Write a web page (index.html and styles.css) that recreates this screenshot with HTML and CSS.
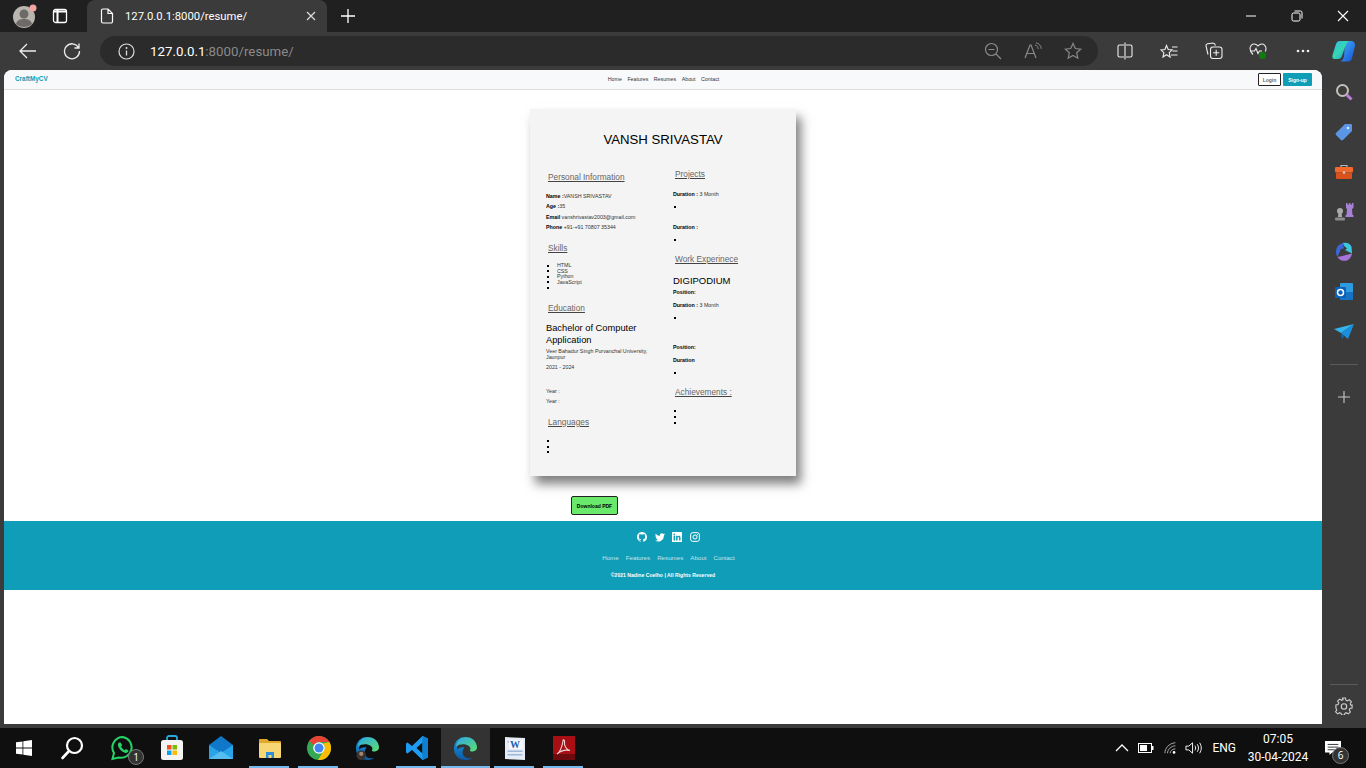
FILE: index.html
```html
<!DOCTYPE html>
<html lang="en">
<head>
    <meta charset="UTF-8">
    <meta name="viewport" content="width=device-width, initial-scale=1.0">
    <title>CraftMyCV Resume</title>
    <link rel="stylesheet" href="styles.css">
</head>
<body>
    <svg class="defs" width="0" height="0">
        <defs>
            <linearGradient id="edgeA" x1="0" y1="0" x2="1" y2="1"><stop offset="0" stop-color="#2fa8e8"/><stop offset="1" stop-color="#5ade6e"/></linearGradient>
            <linearGradient id="edgeB" x1="0" y1="0" x2="0" y2="1"><stop offset="0" stop-color="#1b9de2"/><stop offset="1" stop-color="#0c59a4"/></linearGradient>
            <linearGradient id="copA" x1="0" y1="0" x2="1" y2="1"><stop offset="0" stop-color="#3fb5f5"/><stop offset="1" stop-color="#1a4fd8"/></linearGradient>
            <linearGradient id="copB" x1="0" y1="0" x2="1" y2="1"><stop offset="0" stop-color="#2fb8e8"/><stop offset=".5" stop-color="#38d6b0"/><stop offset="1" stop-color="#1b8de8"/></linearGradient>
            <symbol id="edge" viewBox="0 0 26 26">
                <path d="M13 1C6 1 1 6 1 13c0 7 5 12 12 12 3 0 5-.8 7-2.200-5 1.500-10-1-10-6 0-2 1-3.500 2-4.500-2-1-5-.5-8 2C5 8 8 1 13 1z" fill="url(#edgeB)"/>
                <path d="M3 11C4 5 8 1 13 1c7 0 12 5 12 11 0 2.500-2 4-4.500 4-2 0-3-.5-3-1 1-1 1-3-1-4.500-4-3-10-2-13.500.5z" fill="url(#edgeA)"/>
            </symbol>
        </defs>
    </svg>

    <div class="tabstrip">
        <div class="avatar">
            <svg width="24" height="24" viewBox="0 0 24 24"><circle cx="11" cy="13" r="11" fill="#b9b5af"/><circle cx="11" cy="10" r="4.500" fill="#6e6a68"/><path d="M3 20c1-4 4-5 8-5s7 1 8 5c-2 2-5 3-8 3s-6-1-8-3z" fill="#6e6a68"/><circle cx="20" cy="4" r="3.500" fill="#f3a5a0"/></svg>
        </div>
        <div class="tab-actions">
            <svg width="16" height="16" viewBox="0 0 16 16"><rect x="1.500" y="1.500" width="13" height="13" rx="2" fill="none" stroke="#fff" stroke-width="1.300"/><path d="M1.500 3.500h13M5.500 1.500v13" stroke="#fff" stroke-width="2" fill="none"/></svg>
        </div>
        <div class="tab">
            <svg width="14" height="16" viewBox="0 0 14 16"><path d="M1.500 2.500a1.500 1.500 0 0 1 1.500-1.500h5l4.500 4.500v8a1.500 1.500 0 0 1-1.500 1.500h-8a1.500 1.500 0 0 1-1.500-1.500zM8 1v4.500h4.500" fill="none" stroke="#fff" stroke-width="1.200"/></svg>
            <span class="tab-title">127.0.0.1:8000/resume/</span>
            <svg width="10" height="10" viewBox="0 0 10 10"><path d="M1 1l8 8M9 1l-8 8" stroke="#ddd" stroke-width="1.200"/></svg>
        </div>
        <div class="new-tab">
            <svg width="16" height="16" viewBox="0 0 16 16"><path d="M8 1v14M1 8h14" stroke="#fff" stroke-width="1.300"/></svg>
        </div>
        <div class="window-btns">
            <div class="win-btn"><svg width="12" height="12" viewBox="0 0 12 12"><path d="M1 6h10" stroke="#fff" stroke-width="1"/></svg></div>
            <div class="win-btn"><svg width="12" height="12" viewBox="0 0 12 12"><rect x="1" y="3" width="8" height="8" rx="1.500" fill="none" stroke="#fff"/><path d="M3.500 1h6a1.500 1.500 0 0 1 1.500 1.500v6" fill="none" stroke="#fff"/></svg></div>
            <div class="win-btn"><svg width="12" height="12" viewBox="0 0 12 12"><path d="M1 1l10 10M11 1l-10 10" stroke="#fff" stroke-width="1.100"/></svg></div>
        </div>
    </div>

    <div class="toolbar">
        <div class="tool-btn">
            <svg width="20" height="18" viewBox="0 0 20 18"><path d="M18 9H2M9 2L2 9l7 7" fill="none" stroke="#eee" stroke-width="1.300"/></svg>
        </div>
        <div class="tool-btn">
            <svg width="18" height="18" viewBox="0 0 18 18"><path d="M15.500 5.500A7.500 7.500 0 1 0 16.500 9M16 1.500v4.500h-4.500" fill="none" stroke="#eee" stroke-width="1.300"/></svg>
        </div>
        <div class="address">
            <svg class="info" width="17" height="17" viewBox="0 0 17 17"><circle cx="8.500" cy="8.500" r="7.500" fill="none" stroke="#ddd" stroke-width="1.200"/><path d="M8.500 7.500v5" stroke="#ddd" stroke-width="1.300"/><circle cx="8.500" cy="5" r="1" fill="#ddd"/></svg>
            <span class="url"><span class="url-host">127.0.0.1</span>:8000/resume/</span>
            <div class="addr-btn"><svg width="18" height="18" viewBox="0 0 18 18"><circle cx="7.500" cy="7.500" r="6" fill="none" stroke="#8a8a8a" stroke-width="1.200"/><path d="M4.500 7.500h6M12 12l5 5" stroke="#8a8a8a" stroke-width="1.200"/></svg></div>
            <div class="addr-btn"><svg width="18" height="18" viewBox="0 0 18 18"><path d="M1 16L6 3h1l5 13M3 11.500h7" fill="none" stroke="#8a8a8a" stroke-width="1.200"/><path d="M11 3c2 .5 3 2 3.300 4M12 .8c3 .6 5 3 5.300 6" fill="none" stroke="#8a8a8a"/></svg></div>
            <div class="addr-btn"><svg width="18" height="18" viewBox="0 0 18 18"><path d="M9 1.500l2.300 5 5.400.6-4 3.700 1.100 5.400L9 13.500l-4.800 2.700 1.100-5.400-4-3.700 5.400-.6z" fill="none" stroke="#8a8a8a" stroke-width="1.200"/></svg></div>
        </div>
        <div class="tool-right">
            <div class="tool-slot"><svg width="16" height="18" viewBox="0 0 16 18"><path d="M7 3H2.500a1.500 1.500 0 0 0-1.500 1.500v9A1.500 1.500 0 0 0 2.500 15H7M9 3h4.500A1.500 1.500 0 0 1 15 4.500v9a1.500 1.500 0 0 1-1.500 1.500H9M8 0.500v17" fill="none" stroke="#eee" stroke-width="1.100"/></svg></div>
            <div class="tool-slot"><svg width="18" height="18" viewBox="0 0 18 18"><path d="M6.500 1.500l1.700 4 4 .4-3 2.800.9 4.300-3.600-2.300L3 13l.9-4.300-3-2.800 4-.4z" transform="translate(0 2)" fill="none" stroke="#eee" stroke-width="1.100"/><path d="M12 5h5.500M12.500 9h5M11 13h6.500" stroke="#eee" stroke-width="1.100"/></svg></div>
            <div class="tool-slot"><svg width="18" height="18" viewBox="0 0 18 18"><path d="M3 12.500L1 4a2 2 0 0 1 1.500-2.300L8 1c1.500 0 2 .8 2.500 2.500" fill="none" stroke="#eee" stroke-width="1.100"/><rect x="5.500" y="5" width="11.500" height="11.500" rx="2.500" fill="#3b3b3b" stroke="#eee" stroke-width="1.100"/><path d="M11.200 7.800v6M8.200 10.800h6" stroke="#eee" stroke-width="1.100"/></svg></div>
            <div class="tool-slot"><svg width="18" height="18" viewBox="0 0 18 18"><path d="M4 12.500C2 10.500 1 9 1 6.500 1 4 3 2 5 2c1.700 0 3 .8 4 2 1-1.200 2.300-2 4-2 2 0 4 2 4 4.500 0 1-.2 2-.7 3" fill="none" stroke="#eee" stroke-width="1.100"/><path d="M1.500 9h4l1.500-2.500L9 11.500l1.500-2.500H13" fill="none" stroke="#eee" stroke-width="1.100"/><circle cx="13.500" cy="13.500" r="3.500" fill="#107c10"/></svg></div>
            <div class="tool-slot"><svg width="14" height="4" viewBox="0 0 14 4"><circle cx="2" cy="2" r="1.300" fill="#eee"/><circle cx="7" cy="2" r="1.300" fill="#eee"/><circle cx="12" cy="2" r="1.300" fill="#eee"/></svg></div>
            <div class="tool-slot copilot"><svg width="24" height="24" viewBox="0 0 24 24"><path d="M13 2h6c2.500 0 4.500 2 4 5l-3 12c-.6 2.500-2 3.500-4 3.500H8c2-.5 3-2 4-5z" fill="url(#copA)"/><path d="M8 2h9c-2 1-3 3-4 6l-3 9c-.5 2-2 3-4 3H2.500C.5 20 0 18 .5 16L4 5C4.700 3 6 2 8 2z" fill="url(#copB)"/></svg></div>
        </div>
    </div>

    <div class="browser-body">
        <div class="page">
            <nav class="navbar">
                <a class="brand">CraftMyCV</a>
                <div class="nav-links">
                    <a>Home</a><a>Features</a><a>Resumes</a><a>About</a><a>Contact</a>
                </div>
                <div class="nav-auth">
                    <button class="btn-login">Login</button>
                    <button class="btn-signup">Sign-up</button>
                </div>
            </nav>

            <div class="resume-wrap">
                <div class="resume-card">
                    <h1 class="resume-name">VANSH SRIVASTAV</h1>
                    <div class="resume-cols">
                        <div class="col-left">
                            <h2 class="sec-title">Personal Information</h2>
                            <p class="row"><b>Name :</b>VANSH SRIVASTAV</p>
                            <p class="row"><b>Age :</b>35</p>
                            <p class="row"><b>Email</b> vanshrivastav2003@gmail.com</p>
                            <p class="row"><b>Phone</b> +91-+91 70807 35344</p>

                            <h2 class="sec-title skills-title">Skills</h2>
                            <ul class="list tight">
                                <li>HTML</li>
                                <li>CSS</li>
                                <li>Python</li>
                                <li>JavaScript</li>
                                <li></li>
                            </ul>

                            <h2 class="sec-title edu-title">Education</h2>
                            <h3 class="degree">Bachelor of Computer Application</h3>
                            <p class="school">Veer Bahadur Singh Purvanchal University, Jaunpur</p>
                            <p class="row years">2021 - 2024</p>
                            <p class="row year-a">Year :</p>
                            <p class="row">Year :</p>

                            <h2 class="sec-title lang-title">Languages</h2>
                            <ul class="list tight">
                                <li></li>
                                <li></li>
                                <li></li>
                            </ul>
                        </div>
                        <div class="col-right">
                            <h2 class="sec-title">Projects</h2>
                            <p class="row first"><b>Duration :</b> 3 Month</p>
                            <ul class="list gap-after"><li></li></ul>
                            <p class="row"><b>Duration :</b></p>
                            <ul class="list"><li></li></ul>

                            <h2 class="sec-title work-title">Work Experinece</h2>
                            <h3 class="company">DIGIPODIUM</h3>
                            <p class="row"><b>Position:</b></p>
                            <p class="row dur"><b>Duration :</b> 3 Month</p>
                            <ul class="list gap-after-lg"><li></li></ul>
                            <p class="row"><b>Position:</b></p>
                            <p class="row dur"><b>Duration</b></p>
                            <ul class="list"><li></li></ul>

                            <h2 class="sec-title ach-title">Achievements :</h2>
                            <ul class="list ach-list">
                                <li></li>
                                <li></li>
                                <li></li>
                            </ul>
                        </div>
                    </div>
                </div>
                <button class="btn-download">Download PDF</button>
            </div>

            <footer class="footer">
                <div class="socials">
                    <svg width="10" height="10" viewBox="0 0 16 16"><path fill="#fff" d="M8 0C3.580 0 0 3.580 0 8c0 3.540 2.290 6.530 5.470 7.590.4.070.55-.17.55-.38v-1.340c-2.230.48-2.700-1.070-2.700-1.070-.36-.92-.89-1.170-.89-1.170-.73-.5.050-.49.050-.49.800.060 1.230.820 1.230.820.710 1.220 1.870.870 2.330.660.070-.520.280-.870.510-1.070-1.780-.2-3.640-.890-3.640-3.950 0-.870.310-1.590.820-2.150-.080-.2-.360-1.020.080-2.120 0 0 .670-.210 2.200.820a7.600 7.600 0 0 1 4 0c1.530-1.040 2.200-.820 2.200-.820.440 1.100.160 1.920.080 2.120.510.560.820 1.270.820 2.150 0 3.070-1.870 3.750-3.650 3.950.290.250.540.730.540 1.480v2.200c0 .210.150.460.550.380A8 8 0 0 0 16 8c0-4.420-3.580-8-8-8z"/></svg>
                    <svg width="10" height="10" viewBox="0 0 16 16"><path fill="#fff" d="M16 3.500c-.6.300-1.200.450-1.900.550.700-.400 1.200-1 1.450-1.800-.650.400-1.350.650-2.100.800A3.300 3.300 0 0 0 7.800 6C5.100 5.850 2.700 4.550 1.100 2.600c-.9 1.500-.450 3.450 1 4.400-.550 0-1.050-.150-1.500-.400 0 1.600 1.150 2.950 2.650 3.250-.500.150-1 .150-1.500.050.400 1.300 1.600 2.250 3.050 2.300A6.600 6.600 0 0 1 0 13.550 9.300 9.300 0 0 0 14.350 5.300c.650-.450 1.200-1.050 1.650-1.800z"/></svg>
                    <svg width="10" height="10" viewBox="0 0 16 16"><path fill="#fff" fill-rule="evenodd" d="M1 0h14a1 1 0 0 1 1 1v14a1 1 0 0 1-1 1H1a1 1 0 0 1-1-1V1a1 1 0 0 1 1-1zm1.500 6v7.500h2.400V6zm1.200-3.700a1.400 1.400 0 1 0 0 2.800 1.400 1.400 0 0 0 0-2.800zM6.500 6v7.500h2.400V9.700c0-2.100 2.400-2.200 2.400 0v3.800h2.300V9c0-3.600-3.700-3.500-4.800-1.700V6z"/></svg>
                    <svg width="10" height="10" viewBox="0 0 16 16"><rect x="1" y="1" width="14" height="14" rx="3.500" fill="none" stroke="#fff" stroke-width="1.600"/><circle cx="8" cy="8" r="3.300" fill="none" stroke="#fff" stroke-width="1.600"/><circle cx="12" cy="4" r="1" fill="#fff"/></svg>
                </div>
                <div class="foot-links">
                    <a>Home</a><a>Features</a><a>Resumes</a><a>About</a><a>Contact</a>
                </div>
                <p class="copy">©2021 Nadine Coelho | All Rights Reserved</p>
            </footer>
        </div>

        <aside class="sidebar">
            <div class="side-btn"><svg width="18" height="18" viewBox="0 0 18 18"><circle cx="7.500" cy="7.500" r="5.500" fill="none" stroke="#c4c0ba" stroke-width="2"/><path d="M11.500 11.500l5 5" stroke="#b97fd8" stroke-width="3"/></svg></div>
            <div class="side-btn"><svg width="18" height="18" viewBox="0 0 18 18"><path d="M10 1h6a1 1 0 0 1 1 1v6l-9 9a1.500 1.500 0 0 1-2 0l-5-5a1.500 1.500 0 0 1 0-2z" fill="#5b95e6"/><circle cx="13" cy="5" r="1.300" fill="#dfe9f8"/></svg></div>
            <div class="side-btn"><svg width="18" height="18" viewBox="0 0 18 18"><path d="M6 4V2.500h6V4" fill="none" stroke="#b9b9b9" stroke-width="1.200"/><rect y="4" width="18" height="5.500" rx="1" fill="#f0682a"/><rect x="1" y="9.500" width="16" height="6.500" rx="1" fill="#d9521c"/><circle cx="9" cy="9.500" r="1.300" fill="#cfcfcf"/></svg></div>
            <div class="side-btn"><svg width="20" height="20" viewBox="0 0 20 20"><circle cx="6" cy="9" r="3" fill="#a9a9a9"/><path d="M4.500 11h3l.6 4H3.900z" fill="#a9a9a9"/><rect x="1" y="15.500" width="10" height="3" rx="1" fill="#8b8b8b"/><path d="M12 1h1.500v1.500H15V1h1.500v1.500H18V1h1.500v5l-1.500 1 .5 6h1v2h-8v-2h1l.5-6L12 6z" fill="#a681d6"/></svg></div>
            <div class="side-btn"><svg width="20" height="20" viewBox="0 0 20 20"><path d="M9 1c-4 1-7 4-7 9 0 2 .5 3.500 1.500 5L6 9c.5-2 2-3 4-2z" fill="#3a66d6"/><path d="M9 1c4-1 7 .5 8.500 3.500l.5 7-7-3.500 2-1.500C12 5 10 5 9 1z" fill="#3ec6e0"/><path d="M3.500 15c2 3.500 6 4.500 9.500 3.500 2.500-1 4.500-3.500 5-7L12 13c-2 1-5 1-8.500 2z" fill="#a673d9"/></svg></div>
            <div class="side-btn"><svg width="20" height="20" viewBox="0 0 20 20"><rect x="6" y="1" width="13" height="16" rx="1" fill="#2e9be0"/><rect x="6" y="10" width="13" height="8" fill="#1572c4"/><rect x="1" y="5" width="11" height="11" rx="1" fill="#0a62b8"/><circle cx="6.500" cy="10.500" r="3" fill="none" stroke="#fff" stroke-width="1.500"/></svg></div>
            <div class="side-btn"><svg width="20" height="18" viewBox="0 0 20 18"><path d="M0 6L20 1 7 10z" fill="#34b4ec"/><path d="M20 1L7 10l7 6z" fill="#1a8fdc"/><path d="M7 10l1 6 2-3z" fill="#0f6cb8"/></svg></div>
            <div class="side-line"></div>
            <div class="side-btn plus"><svg width="14" height="14" viewBox="0 0 14 14"><path d="M7 1v12M1 7h12" stroke="#c8c8c8" stroke-width="1.100"/></svg></div>
            <div class="side-bottom">
                <div class="side-line"></div>
                <div class="side-btn"><svg width="18" height="18" viewBox="0 0 18 18"><path d="M7.500 1h3l.4 2.200 1.500.7 1.900-1.200 2.100 2.100-1.200 1.900.7 1.500L17.100 8v3l-2.200.4-.7 1.500 1.200 1.900-2.100 2.100-1.900-1.200-1.500.7-.4 1.600h-3l-.4-1.600-1.500-.7-1.900 1.200-2.100-2.100 1.200-1.900-.7-1.500L.9 11V8l2.200-.4.7-1.500-1.200-1.900 2.100-2.100 1.900 1.200 1.500-.7z" fill="none" stroke="#d0d0d0" stroke-width="1.100"/><circle cx="9" cy="9.500" r="2.700" fill="none" stroke="#d0d0d0" stroke-width="1.100"/></svg></div>
            </div>
        </aside>
    </div>

    <div class="taskbar">
        <div class="task-fixed"><svg width="16" height="16" viewBox="0 0 16 16"><path fill="#fff" d="M0 2.300L6.500 1.400v6.200H0zM7.300 1.300L16 0v7.600H7.300zM0 8.400h6.500v6.200L0 13.700zM7.300 8.400H16V16l-8.700-1.200z"/></svg></div>
        <div class="task-fixed"><svg width="24" height="24" viewBox="0 0 24 24"><circle cx="14.500" cy="9.500" r="7.500" fill="none" stroke="#fff" stroke-width="2.200"/><path d="M9 15l-6.500 7" stroke="#fff" stroke-width="2.600" stroke-linecap="round"/></svg></div>
        <div class="task-app">
            <svg width="26" height="26" viewBox="0 0 26 26"><path d="M13 2a10.500 10.500 0 0 0-9 16L2.500 24l6-1.500A10.500 10.500 0 1 0 13 2z" fill="none" stroke="#25d366" stroke-width="2"/><path d="M9 7.500c-1.500 1-1.500 3 0 5.500s4 4.500 6.500 5c1.500.2 3-1 3-2.500l-2.500-1.500-1.300 1.200c-1.500-.7-3-2.200-3.700-3.700l1.200-1.300L10.500 7.500z" fill="#25d366"/></svg>
            <span class="task-badge">1</span>
        </div>
        <div class="task-app">
            <svg width="24" height="26" viewBox="0 0 24 26"><path d="M7 6V3a2 2 0 0 1 2-2h6a2 2 0 0 1 2 2v3" fill="none" stroke="#29a8e0" stroke-width="1.800"/><rect x="1" y="5" width="22" height="20" rx="2.500" fill="#f4f4f4"/><rect x="7" y="10" width="4.500" height="4.500" fill="#f25022"/><rect x="12.500" y="10" width="4.500" height="4.500" fill="#7fba00"/><rect x="7" y="15.500" width="4.500" height="4.500" fill="#00a4ef"/><rect x="12.500" y="15.500" width="4.500" height="4.500" fill="#ffb900"/></svg>
        </div>
        <div class="task-app">
            <svg width="26" height="26" viewBox="0 0 26 26"><path d="M13 1L1 10v14h24V10z" fill="#0f78c8"/><path d="M1 10l12 8 12-8v14H1z" fill="#29a3e8"/><path d="M1 24l12-8 12 8z" fill="#55bdf0"/></svg>
        </div>
        <div class="task-app on">
            <svg width="24" height="22" viewBox="0 0 24 22"><path d="M1 3a1 1 0 0 1 1-1h7l2 2h11a1 1 0 0 1 1 1v3H1z" fill="#e0a92e"/><rect x="1" y="6" width="22" height="15" rx="1" fill="#f7d774"/><path d="M8 21v-6h8v6h-2.500v-3h-3v3z" fill="#2a8fd8"/></svg>
        </div>
        <div class="task-app on">
            <svg width="24" height="24" viewBox="0 0 24 24"><circle cx="12" cy="12" r="12" fill="#34a853"/><path d="M12 0a12 12 0 0 1 10.400 6H12a6 6 0 0 0-5.500 3.600L2.400 4.700A12 12 0 0 1 12 0z" fill="#ea4335"/><path d="M22.400 6A12 12 0 0 1 11 24l5.500-9a6 6 0 0 0-.6-7.500z" fill="#fbbc05"/><circle cx="12" cy="12" r="5.800" fill="#fff"/><circle cx="12" cy="12" r="4.500" fill="#4285f4"/></svg>
        </div>
        <div class="task-app">
            <svg width="25" height="25" viewBox="0 0 26 26"><use href="#edge"/><circle cx="6.500" cy="20" r="5" fill="#3a3431"/><circle cx="6.500" cy="18.500" r="2.200" fill="#a98672"/></svg>
        </div>
        <div class="task-app on">
            <svg width="24" height="26" viewBox="0 0 24 26"><path d="M17.500 1L23 3.500v19L17.500 25 7 15l-4.500 3.500L1 17.500v-9L2.500 7.500 7 11zM17.500 7.500L11.500 13l6 5.500z" fill="#1f9cf0" fill-rule="evenodd"/><path d="M17.500 1L23 3.500v19L17.500 25z" fill="#0f7fd0"/></svg>
        </div>
        <div class="task-app active">
            <svg width="25" height="25" viewBox="0 0 26 26"><use href="#edge"/></svg>
        </div>
        <div class="task-app on">
            <svg width="24" height="26" viewBox="0 0 24 26"><path d="M2 2l20 1v22L2 24z" fill="#e6ecf6"/><rect x="4.500" y="6" width="15" height="1.500" fill="#9db7dc"/><rect x="4.500" y="19" width="15" height="1.500" fill="#9db7dc"/><rect x="4.500" y="15.500" width="15" height="1.500" fill="#9db7dc"/><rect x="6" y="5" width="14" height="9" fill="#f5f7fb"/><text x="7" y="13" class="word-w">W</text></svg>
        </div>
        <div class="task-app on">
            <svg width="22" height="24" viewBox="0 0 22 24"><rect width="22" height="24" fill="#a80f14"/><rect y="18" width="22" height="6" fill="#6d0a0d"/><path d="M4 18c3-2 5-7 6-13 0-2 2-1 1.500 1-.5 4 2 8 5.500 8.500-5-1-9 0-13 3.500z" fill="none" stroke="#f0d8d8" stroke-width="1.100"/></svg>
        </div>
        <div class="tray">
            <svg class="tray-chev" width="14" height="8" viewBox="0 0 14 8"><path d="M1 7l6-6 6 6" fill="none" stroke="#fff" stroke-width="1.300"/></svg>
            <svg class="tray-batt" width="16" height="10" viewBox="0 0 16 10"><rect x=".5" y=".5" width="13" height="9" fill="none" stroke="#fff"/><rect x="2" y="2" width="7" height="6" fill="#fff"/><rect x="14" y="3" width="1.500" height="4" fill="#fff"/></svg>
            <svg class="tray-wifi" width="14" height="14" viewBox="0 0 16 14"><path d="M1 13C1 7 6 1.500 13 1M4 13c0-4 4-8.500 9-8.500M7 13c0-2.500 2.500-5 6-5" fill="none" stroke="#bbb" stroke-width="1"/><circle cx="11.500" cy="12" r="1.500" fill="#fff"/></svg>
            <svg class="tray-vol" width="17" height="14" viewBox="0 0 18 14"><path d="M1 5h3l4-3.500v11L4 9H1z" fill="none" stroke="#fff"/><path d="M10.500 4.500c1 1.500 1 3.500 0 5M13 3c1.700 2.500 1.700 5.500 0 8M15.500 1.500c2.300 3.500 2.300 7.500 0 11" fill="none" stroke="#fff"/></svg>
            <span class="tray-lang">ENG</span>
            <div class="clock"><span>07:05</span><span>30-04-2024</span></div>
            <div class="notify">
                <svg width="18" height="16" viewBox="0 0 20 18"><path d="M1 1h18v13H9l-3 3v-3H1z" fill="#fff"/><path d="M4 5h12M4 8h12M4 11h8" stroke="#222" stroke-width="1"/></svg>
                <span class="task-badge">6</span>
            </div>
        </div>
    </div>
</body>
</html>
```

FILE: styles.css
```css
* {
    box-sizing: border-box;
}
html, body {
    margin: 0;
    height: 768px;
    overflow: hidden;
}
body {
    background-color: #3b3b3b;
    font-family: "Liberation Sans", Arial, sans-serif;
    display: flex;
    flex-direction: column;
}
.defs {
    display: block;
    height: 0;
}

/* tab strip */
.tabstrip {
    height: 32px;
    background-color: #202020;
    display: flex;
    align-items: flex-end;
    flex-shrink: 0;
}
.avatar {
    width: 44px;
    height: 32px;
    display: flex;
    align-items: center;
    justify-content: flex-end;
    padding-right: 7px;
}
.tab-actions {
    width: 32px;
    height: 32px;
    display: flex;
    align-items: center;
    justify-content: center;
}
.tab {
    margin-left: 11px;
    width: 240px;
    height: 32px;
    background-color: #3b3b3b;
    border-radius: 8px 8px 0 0;
    display: flex;
    align-items: center;
    padding: 0 11px 0 13px;
    color: #fff;
}
.tab-title {
    flex: 1;
    margin-left: 11px;
    font-family: Roboto, sans-serif;
    font-size: 11.3px;
}
.new-tab {
    width: 42px;
    height: 32px;
    display: flex;
    align-items: center;
    justify-content: center;
}
.window-btns {
    margin-left: auto;
    display: flex;
    height: 32px;
}
.win-btn {
    width: 46px;
    display: flex;
    align-items: center;
    justify-content: center;
}

/* toolbar */
.toolbar {
    height: 38px;
    display: flex;
    align-items: center;
    padding: 0 4px 0 8px;
    gap: 4px;
    flex-shrink: 0;
}
.tool-btn {
    width: 40px;
    height: 30px;
    display: flex;
    align-items: center;
    justify-content: center;
}
.address {
    flex: 1;
    margin-left: 4px;
    height: 30px;
    border-radius: 15px;
    background-color: #2b2b2b;
    display: flex;
    align-items: center;
    padding: 0 5px 0 18px;
}
.url {
    flex: 1;
    margin-left: 15px;
    font-family: Roboto, sans-serif;
    font-size: 13.3px;
    color: #8a8a8a;
}
.url-host {
    color: #fff;
}
.addr-btn {
    width: 40px;
    display: flex;
    justify-content: center;
}
.tool-right {
    display: flex;
    align-items: center;
    margin-left: 1px;
}
.tool-slot {
    width: 44.5px;
    display: flex;
    justify-content: center;
}
.copilot {
    width: 37px;
}

/* main area */
.browser-body {
    height: 658px;
    display: flex;
    flex-shrink: 0;
}
.page {
    margin-left: 4px;
    width: 1318px;
    height: 654px;
    background-color: #fff;
    border-radius: 8px 8px 0 0;
    overflow: hidden;
}
.navbar {
    height: 20px;
    background-color: #f8f9fa;
    border-bottom: 1px solid #dcdcdc;
    display: grid;
    grid-template-columns: 1fr auto 1fr;
    align-items: center;
    padding: 0 10px 0 11px;
}
.brand {
    margin-bottom: 2px;
    font-size: 6.4px;
    font-weight: bold;
    color: #0f9db7;
}
.nav-links {
    margin-bottom: 2px;
    display: flex;
    gap: 5.5px;
    font-size: 5.3px;
    color: #333;
}
.nav-auth {
    display: flex;
    justify-content: flex-end;
    gap: 2px;
}
.nav-auth button {
    height: 13px;
    font-size: 5px;
    font-weight: bold;
    font-family: inherit;
    padding: 0;
    border-radius: 1px;
}
.btn-login {
    width: 23px;
    background-color: #fff;
    border: 1px solid #222;
    color: #666;
}
.btn-signup {
    width: 29px;
    background-color: #0f9db7;
    border: none;
    color: #fff;
}

/* resume */
.resume-wrap {
    width: 266px;
    margin: 19px auto 0;
}
.resume-card {
    height: 367px;
    background-color: #f4f4f4;
    box-shadow: 5px 8px 10px rgba(0, 0, 0, 0.5);
    padding-top: 23px;
    color: #000;
}
.resume-name {
    margin: 0 0 21px;
    font-size: 13.2px;
    line-height: 16px;
    font-weight: normal;
    text-align: center;
}
.resume-cols {
    display: grid;
    grid-template-columns: 111px 1fr;
    column-gap: 16px;
    padding: 0 16px;
}
.col-left {
    padding-top: 3px;
}
.sec-title {
    margin: 0 0 0 2px;
    font-size: 8.3px;
    line-height: 10px;
    font-weight: normal;
    color: #666;
    text-decoration: underline;
    text-decoration-color: #444;
}
.row {
    margin: 0 0 4.5px;
    font-size: 5.3px;
    line-height: 6px;
    color: #333;
}
.row b {
    color: #000;
}
.col-left .sec-title:first-child {
    margin-bottom: 10.5px;
}
.first {
    margin-top: 12px;
}
.list {
    list-style: none;
    margin: 0;
    padding: 0;
    font-size: 5.3px;
    color: #333;
}
.list li {
    display: flex;
    align-items: center;
    gap: 8px;
    height: 6px;
    line-height: 6px;
    padding-left: 1px;
}
.list li::before {
    content: "";
    width: 2px;
    height: 2px;
    background-color: #000;
    flex-shrink: 0;
}
.tight li {
    height: 5.5px;
    line-height: 5.5px;
}
.skills-title {
    margin-top: 13px;
    margin-bottom: 10px;
}
.edu-title {
    margin-top: 12px;
    margin-bottom: 9px;
}
.degree {
    margin: 0;
    font-size: 9.3px;
    line-height: 12.5px;
    font-weight: normal;
}
.school {
    margin: 1px 0 0;
    font-size: 5.3px;
    line-height: 6px;
    color: #333;
}
.years {
    margin-top: 4px;
}
.year-a {
    margin-top: 18px;
}
.lang-title {
    margin-top: 12.5px;
    margin-bottom: 12px;
}
.col-right .list {
    margin-top: 7px;
}
.gap-after {
    margin-bottom: 14px;
}
.gap-after-lg {
    margin-bottom: 23px;
}
.work-title {
    margin-top: 11px;
    margin-bottom: 11px;
}
.company {
    margin: 0 0 3px;
    font-size: 9.5px;
    line-height: 11px;
    font-weight: normal;
}
.dur {
    margin-top: 7px;
}
.ach-title {
    margin-top: 11px;
}
.col-right .ach-list {
    margin-top: 11px;
}
.btn-download {
    display: block;
    margin: 20px 0 0 41px;
    width: 47px;
    height: 19px;
    padding: 0;
    font-size: 5px;
    font-weight: bold;
    font-family: inherit;
    color: #000;
    background-color: #69e86b;
    border: 1px solid #222;
    border-radius: 2px;
}

/* footer */
.footer {
    margin-top: 6px;
    height: 69px;
    background-color: #0f9db7;
    display: flex;
    flex-direction: column;
    align-items: center;
    padding-top: 11px;
}
.socials {
    display: flex;
    gap: 7.5px;
    height: 10px;
    margin-left: 11px;
}
.foot-links {
    margin-top: 12px;
    margin-left: 11px;
    display: flex;
    gap: 7px;
    font-size: 6.2px;
    line-height: 8px;
    color: rgba(255, 255, 255, 0.75);
}
.copy {
    margin: 10px 0 0;
    font-size: 5.1px;
    line-height: 6px;
    font-weight: bold;
    color: #fff;
}

/* edge sidebar */
.sidebar {
    width: 44px;
    display: flex;
    flex-direction: column;
    align-items: center;
    padding-top: 2px;
    height: 656px;
}
.side-btn {
    width: 44px;
    height: 40px;
    display: flex;
    align-items: center;
    justify-content: center;
    flex-shrink: 0;
}
.side-line {
    width: 28px;
    height: 1px;
    background-color: #5a5a5a;
    margin-top: 12px;
    flex-shrink: 0;
}
.plus {
    margin-top: 12px;
}
.side-bottom {
    margin-top: auto;
    display: flex;
    flex-direction: column;
    align-items: center;
}
.side-bottom .side-line {
    margin-top: 0;
    margin-bottom: 1px;
}

/* windows taskbar */
.taskbar {
    height: 40px;
    background-color: #0f0f0f;
    display: flex;
    color: #fff;
}
.task-fixed {
    width: 48px;
    display: flex;
    align-items: center;
    justify-content: center;
}
.task-fixed + .task-app {
    margin-left: 2px;
}
.task-app {
    position: relative;
    width: 49px;
    display: flex;
    align-items: center;
    justify-content: center;
}
.task-app.on::after,
.task-app.active::after {
    content: "";
    position: absolute;
    left: 4px;
    right: 5px;
    bottom: 0;
    height: 2px;
    background-color: #76b9ed;
}
.task-app.active {
    background-color: #333;
}
.task-app.active::after {
    left: 0;
    right: 0;
}
.task-badge {
    position: absolute;
    right: 3px;
    bottom: 3px;
    width: 16px;
    height: 16px;
    border-radius: 50%;
    background-color: #333;
    border: 1px solid #777;
    font-family: "Open Sans", sans-serif;
    font-size: 10px;
    line-height: 14px;
    text-align: center;
    color: #fff;
}
.word-w {
    font-family: "Liberation Serif", serif;
    font-size: 10px;
    font-weight: bold;
    fill: #1d5fb4;
}
.tray {
    margin-left: auto;
    display: flex;
    align-items: center;
    font-family: Roboto, sans-serif;
    font-size: 12px;
}
.tray-chev {
    margin-right: 9px;
}
.tray-batt {
    margin-right: 10px;
}
.tray-wifi {
    margin-right: 7px;
}
.tray-vol {
    margin-right: 10px;
}
.tray-lang {
    margin-right: 4px;
}
.clock {
    width: 76px;
    display: flex;
    flex-direction: column;
    align-items: center;
    line-height: 18px;
}
.notify {
    position: relative;
    width: 50px;
    height: 40px;
    display: flex;
    align-items: center;
    justify-content: center;
    padding-right: 16px;
}
.notify .task-badge {
    right: 17px;
    bottom: 4px;
    width: 17px;
    height: 17px;
}
```
